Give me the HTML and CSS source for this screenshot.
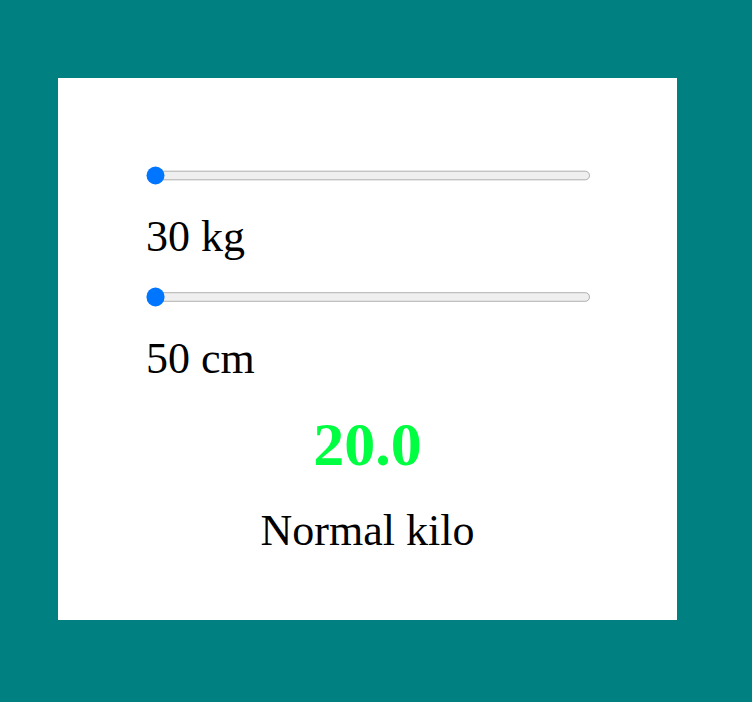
FILE: index.html
```html
<!DOCTYPE html>
<html>
<head>
<meta charset="utf-8">
<link rel="stylesheet" href="styles.css">
</head>
<body>
<div class="card">
  <input class="slider slider-weight" type="range" min="30" max="200" value="30">
  <div class="value value-weight">30 kg</div>
  <input class="slider slider-height" type="range" min="50" max="250" value="50">
  <div class="value value-height">50 cm</div>
  <div class="result">20.0</div>
  <div class="status">Normal kilo</div>
</div>
</body>
</html>
```
FILE: styles.css
```css
html, body {
  margin: 0;
  padding: 0;
}
body {
  background: #008080;
  padding: 78px 0 0 58px;
  font-family: "Liberation Serif", "Times New Roman", serif;
  color: #000;
}
.card {
  box-sizing: border-box;
  width: 619px;
  height: 542px;
  background: #fff;
  padding: 88px 88px 0 88px;
  display: flex;
  flex-direction: column;
}
.slider {
  display: block;
  width: 371px;
  margin: 0;
  zoom: 1.2;
}
.value {
  font-size: 44px;
  line-height: normal;
}
.value-weight {
  margin-top: 26px;
}
.slider-height {
  margin-top: 21px;
}
.value-height {
  margin-top: 26px;
}
.result {
  font-size: 62px;
  font-weight: bold;
  color: #00ff40;
  text-align: center;
  margin-top: 25px;
}
.status {
  font-size: 44px;
  text-align: center;
  margin-top: 25px;
}
```
